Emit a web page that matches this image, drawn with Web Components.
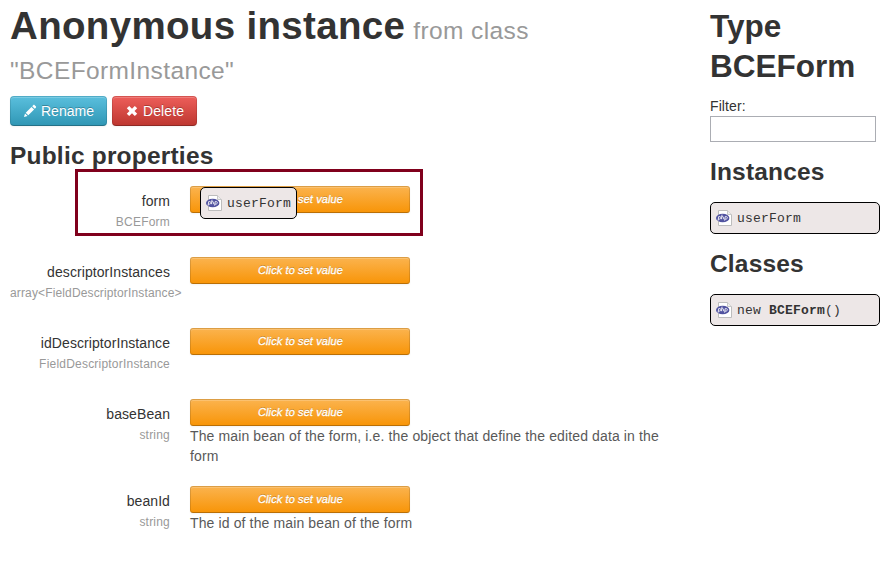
<!DOCTYPE html>
<html lang="en"><head><meta charset="utf-8"><title>BCEFormInstance</title>
<style>
body{margin:0;background:#fff;color:#333;font:14px/20px "Liberation Sans",Arial,sans-serif}
</style></head><body>
<instance-page></instance-page>
<script>
const define=(name,html,setup)=>customElements.define(name,class extends HTMLElement{
  connectedCallback(){
    if(this.shadowRoot)return;
    this.attachShadow({mode:'open'}).innerHTML=html;
    if(setup)setup(this,this.shadowRoot);
  }
});

define('php-icon',`<style>:host{display:block;width:16px;height:16px;flex:none;white-space:normal}svg{display:block}</style>
<svg width="16" height="16" viewBox="0 0 16 16"><path d="M2.5.5h9l4 4v11h-13z" fill="#fff" stroke="#bdbdbd"/><path d="M11.5.5v4h4" fill="#eee" stroke="#c8c8c8"/>
<ellipse cx="6.7" cy="8" rx="6.7" ry="4.3" fill="#5153a0"/>
<path d="M2.5 10.6V6.6h1.2c1.5 0 1.5 2.5 0 2.5H2.5M5.6 4.7v4.5M5.6 6.7h1c.8 0 .9.5.9 2.5M9 10.6V6.6h1.2c1.5 0 1.5 2.5 0 2.5H9" transform="translate(1.1 0) skewX(-8)" fill="none" stroke="#fff" stroke-opacity=".9" stroke-width=".9"/></svg>`);

define('instance-chip',`<style>:host{display:flex;box-sizing:border-box;height:32px;align-items:center;border:1px solid #000;border-radius:5px;background:#ede7e7;padding:0 0 0 5px;gap:5px;font:13px/20px "Liberation Mono","Courier New",monospace;white-space:pre}
span{letter-spacing:.2px;padding-top:2px}</style><php-icon></php-icon><span><slot></slot></span>`);

define('action-button',`<style>:host{display:flex;box-sizing:border-box;height:30px;align-items:center;gap:4px;padding:0 12px;border:1px solid;border-color:rgba(0,0,0,.1) rgba(0,0,0,.1) rgba(0,0,0,.25);border-radius:4px;color:#fff;text-shadow:0 -1px 0 rgba(0,0,0,.25);background:linear-gradient(#5bc0de,#2f96b4) border-box;box-shadow:inset 0 1px 0 rgba(255,255,255,.2),0 1px 2px rgba(0,0,0,.05);white-space:nowrap}
:host([danger]){background:linear-gradient(#ee5f5b,#bd362f) border-box;letter-spacing:.14px}::slotted(svg){display:block;flex:none}</style><slot name="icon"></slot><slot></slot>`);

define('value-button',`<style>:host{display:flex;box-sizing:border-box;width:220px;height:27px;align-items:center;justify-content:center;padding-left:1px;border:1px solid;border-color:rgba(0,0,0,.12) rgba(0,0,0,.12) rgba(0,0,0,.25);border-radius:3px;background:linear-gradient(#fbb450,#f89406) border-box;color:#fff;font-size:11px;line-height:17px;font-style:italic;letter-spacing:.1px;white-space:pre;text-shadow:0 -1px 0 rgba(0,0,0,.25);-webkit-text-stroke:.3px #fff;box-shadow:inset 0 1px 0 rgba(255,255,255,.2),0 1px 2px rgba(0,0,0,.05)}
:host([covered]) .lead{visibility:hidden}</style><span class="lead">Click to </span><span>set value</span>`);

define('property-row',`<style>:host{display:grid;grid-template-columns:160px 1fr;column-gap:20px;min-height:51px}
.label{padding-top:5px;display:flex;flex-direction:column;align-items:flex-end}
.name{letter-spacing:.08px}.type{font-size:12px;line-height:22px;height:20px;color:#999;letter-spacing:.21px}.wide{align-self:flex-start;white-space:nowrap;letter-spacing:.14px}
.desc{color:#595959;letter-spacing:.125px}</style><div class="label"><span class="name"></span><span class="type"></span></div><div><value-button></value-button><div class="desc"><slot></slot></div></div>`,
(el,root)=>{root.querySelector('.name').textContent=el.getAttribute('name');
 const type=root.querySelector('.type');type.textContent=el.getAttribute('type');
 if(el.hasAttribute('wide'))type.classList.add('wide');
 if(el.hasAttribute('covered'))root.querySelector('value-button').setAttribute('covered','');});

define('instance-properties',`<style>:host{display:block}
h1,h2{margin:0;line-height:40px;font-weight:bold}h1{font-size:38.5px;letter-spacing:.33px}small{font-size:24.5px;line-height:1;font-weight:normal;color:#999;letter-spacing:.39px;margin-left:-3px}.line{margin-left:0}
.actions{display:flex;gap:5px;margin:10px 0}h2{font-size:24.5px;margin-bottom:10px;letter-spacing:.2px}.rows{display:grid;gap:20px}</style>
<h1>Anonymous instance <small>from class</small><br><small class="line">"BCEFormInstance"</small></h1>
<div class="actions">
<action-button><svg slot="icon" width="14" height="14" viewBox="0 0 14 14" fill="#fff"><path d="M1 13l1-3.6L4.6 12zM2.7 8.7l5.8-5.8 2.6 2.6-5.8 5.8zM9.2 2.2l1-1c.5-.5 1-.5 1.5 0l1.1 1.1c.5.5.5 1 0 1.5l-1 1z"/></svg>Rename</action-button>
<action-button danger><svg slot="icon" width="14" height="14" viewBox="0 0 14 14" fill="#fff"><path d="M4.2 2L7 4.7 9.8 2 12.2 4.3 9.5 7l2.7 2.7L9.8 12 7 9.3 4.2 12 1.8 9.7 4.5 7 1.8 4.3z"/></svg>Delete</action-button></div>
<h2>Public properties</h2>
<div class="rows"><property-row name="form" type="BCEForm" covered></property-row>
<property-row name="descriptorInstances" type="array&lt;FieldDescriptorInstance&gt;" wide></property-row>
<property-row name="idDescriptorInstance" type="FieldDescriptorInstance"></property-row>
<property-row name="baseBean" type="string">The main bean of the form, i.e. the object that define the edited data in the form</property-row>
<property-row name="beanId" type="string">The id of the main bean of the form</property-row></div>`);

define('type-sidebar',`<style>:host{display:block}h1,h2{margin:0;line-height:40px}h1{font-size:31.5px;margin-bottom:10px}h2{font-size:24.5px;margin:10px 0;letter-spacing:.17px}
label{display:block;letter-spacing:.1px}input{display:block;box-sizing:border-box;width:166px;height:26px;border:1px solid #abadb3;background:#fff;padding:2px}</style>
<h1>Type BCEForm</h1><label for="filter">Filter:</label><input id="filter"><h2>Instances</h2><instance-chip>userForm</instance-chip><h2>Classes</h2><instance-chip>new <b>BCEForm</b>()</instance-chip>`);

define('instance-page',`<style>:host{display:grid;position:relative;box-sizing:border-box;height:586px;overflow:hidden;grid-template-columns:670px 170px;column-gap:30px;padding:6px 14px 0 10px}
.highlight{position:absolute;left:75px;top:169px;width:348px;height:67px;box-sizing:border-box;border:3px solid #80001c}
.dragged{position:absolute;left:200px;top:187px;width:97px}</style>
<instance-properties></instance-properties><type-sidebar></type-sidebar><div class="highlight"></div><instance-chip class="dragged">userForm</instance-chip>`);
</script></body></html>
